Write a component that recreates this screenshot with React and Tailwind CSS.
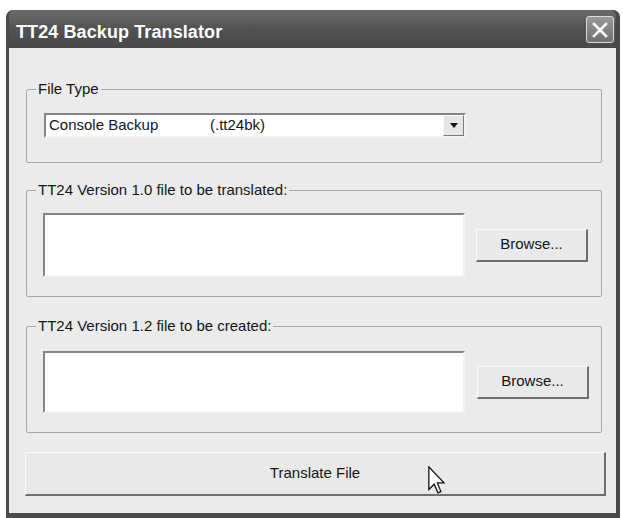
import React from 'react'

function GroupBox({ label, className = '', children }) {
  return (
    <fieldset className={`ml-[1px] w-[576px] border border-[#a7a7a7] rounded-[2px] ${className}`}>
      <legend className="ml-[9px] px-[2px] text-[15px] leading-[18px] text-[#151515]">{label}</legend>
      {children}
    </fieldset>
  )
}

function RaisedButton({ className = '', children }) {
  return (
    <button
      type="button"
      className={`relative flex items-center justify-center bg-[#e9e9e9] border-t border-l border-t-[#fbfbfb] border-l-[#fbfbfb] border-r-2 border-b-2 border-r-[#6f6f6f] border-b-[#6f6f6f] text-[15px] text-[#151515] ${className}`}
    >
      {children}
    </button>
  )
}

function TextBox({ className = '' }) {
  return (
    <div className={`bg-white border-2 border-[#f3f3f3] border-t-[#858585] border-l-[#858585] ${className}`} />
  )
}

function CloseButton() {
  return (
    <div className="w-[28px] h-[27px] rounded-[3px] border border-[#dcdcdc] bg-gradient-to-b from-[#9a9a9a] to-[#6e6e6e] flex items-center justify-center">
      <svg width="18" height="18" viewBox="0 0 18 18">
        <path d="M3 3 L15 15 M15 3 L3 15" stroke="#fff" strokeWidth="2.6" strokeLinecap="square" />
      </svg>
    </div>
  )
}

function Cursor() {
  return (
    <svg className="absolute left-[402px] top-[13px]" width="17" height="28" viewBox="0 0 12 19.5" preserveAspectRatio="none">
      <path d="M0.6 0.6 V16.4 L4.4 12.7 L7 18.7 L9.1 17.8 L6.6 11.8 H11.4 Z" fill="#fff" stroke="#111" strokeWidth="0.9" strokeLinejoin="miter" />
    </svg>
  )
}

export default function App() {
  return (
    <div className="w-[623px] h-[518px] bg-white pt-[10px] pl-[6px] overflow-hidden font-['Liberation_Sans',Arial,sans-serif]">
      <div className="w-[614px] h-[508px] flex flex-col bg-[#4c4c4c] rounded-t-[7px] border-l-[3px] border-r-[4px] border-b-[5px] border-[#4a4a4a]">
        {/* title bar */}
        <div className="h-[38px] flex items-center justify-between pl-[7px] pr-[2px] rounded-t-[6px] bg-gradient-to-b from-[#6c6c6c] via-[#525252] to-[#484848]">
          <span className="text-white font-bold text-[18px] leading-none pt-[6px] tracking-[0.1px]">TT24 Backup Translator</span>
          <div className="pt-[1px]">
            <CloseButton />
          </div>
        </div>

        {/* body */}
        <div className="flex-1 bg-[#ebebeb] pt-[32px] px-[16px]">
          <GroupBox label="File Type">
            <div className="pt-[15px] pb-[24px] pl-[17px]">
              <div className="w-[422px] h-[25px] bg-white border-2 border-[#f3f3f3] border-t-[#858585] border-l-[#858585] flex items-center">
                <span className="pl-[3px] w-[164px] text-[15px] text-[#151515]">Console Backup</span>
                <span className="flex-1 text-[15px] text-[#151515]">(.tt24bk)</span>
                <div className="w-[21px] h-full bg-[#e6e6e6] border-t border-l border-[#fafafa] border-r border-b border-r-[#7a7a7a] border-b-[#7a7a7a] flex items-center justify-center">
                  <svg width="8" height="5" viewBox="0 0 8 5">
                    <path d="M0 0 H8 L4 5 Z" fill="#111" />
                  </svg>
                </div>
              </div>
            </div>
          </GroupBox>

          <GroupBox label="TT24 Version 1.0 file to be translated:" className="mt-[18px]">
            <div className="pt-[14px] pb-[19px] pl-[16px] flex items-center">
              <TextBox className="w-[422px] h-[64px]" />
              <RaisedButton className="ml-[11px] w-[112px] h-[33px]">Browse...</RaisedButton>
            </div>
          </GroupBox>

          <GroupBox label="TT24 Version 1.2 file to be created:" className="mt-[20px]">
            <div className="pt-[16px] pb-[19px] pl-[16px] flex items-center">
              <TextBox className="w-[422px] h-[62px]" />
              <RaisedButton className="ml-[12px] w-[112px] h-[33px]">Browse...</RaisedButton>
            </div>
          </GroupBox>

          <RaisedButton className="mt-[19px] w-[581px] h-[44px]">
            Translate File
            <Cursor />
          </RaisedButton>
        </div>
      </div>
    </div>
  )
}
